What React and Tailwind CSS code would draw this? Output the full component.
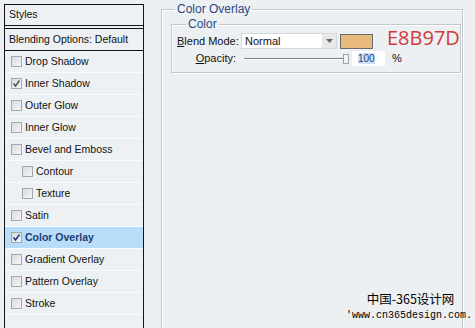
import React from "react";

const ITEMS = [
  { label: "Drop Shadow", checked: false },
  { label: "Inner Shadow", checked: true },
  { label: "Outer Glow", checked: false },
  { label: "Inner Glow", checked: false },
  { label: "Bevel and Emboss", checked: false },
  { label: "Contour", checked: false, indent: true },
  { label: "Texture", checked: false, indent: true },
  { label: "Satin", checked: false },
  { label: "Color Overlay", checked: true, active: true },
  { label: "Gradient Overlay", checked: false },
  { label: "Pattern Overlay", checked: false },
  { label: "Stroke", checked: false },
];

function CheckBox({ checked, active }) {
  return (
    <div className="w-[11px] h-[11px] shrink-0 border border-[#a3a8ad] bg-gradient-to-br from-[#d9dcdf] to-[#f4f5f6] flex items-center justify-center">
      {checked && (
        <svg width="9" height="9" viewBox="0 0 9 9">
          <path
            d="M1.5 4.5 L3.5 7 L7.5 1.5"
            fill="none"
            stroke={active ? "#1e3c7a" : "#555"}
            strokeWidth="1.6"
          />
        </svg>
      )}
    </div>
  );
}

export default function App() {
  return (
    <div
      className="w-[475px] h-[328px] overflow-hidden bg-[#edf0f3] flex items-start text-[11px] text-[#111] relative"
      style={{ fontFamily: '"Liberation Sans", Arial, sans-serif' }}
    >
      {/* left styles list */}
      <div className="ml-[4px] mt-[4px] w-[140px] h-[340px] shrink-0 border border-[#141414] bg-[#eef1f4] flex flex-col text-[10.5px]">
        <div className="h-[21px] pl-[4px] flex items-center border-b border-[#141414]">Styles</div>
        <div className="h-[2px]" />
        <div className="h-[23px] pl-[4px] flex items-center border-t border-b border-[#141414]">
          Blending Options: Default
        </div>
        {ITEMS.map((it) => (
          <div
            key={it.label}
            className={`h-[22px] flex items-center gap-[3px] border-b border-[#fafbfc] ${
              it.indent ? "pl-[17px]" : "pl-[6px]"
            } ${it.active ? "bg-[#b8ddf8] font-bold text-[#1e3c7a]" : ""}`}
          >
            <CheckBox checked={it.checked} active={it.active} />
            <span>{it.label}</span>
          </div>
        ))}
      </div>

      {/* right options */}
      <fieldset className="ml-[17px] mt-[3px] w-[302px] h-[360px] shrink-0 border border-[#c3c8cd] shadow-[inset_1px_1px_0_#fff,1px_1px_0_#fff]">
        <legend className="ml-[13px] px-[2px] text-[#29477f] text-[12px] leading-[12px]">Color Overlay</legend>
        <fieldset className="ml-[9px] mt-[3px] w-[286px] h-[55px] border border-[#c3c8cd] shadow-[inset_1px_1px_0_#fff,1px_1px_0_#fff]">
          <legend className="ml-[14px] px-[2px] text-[#29477f] text-[12px] leading-[12px]">Color</legend>
          <div className="flex items-center h-[16px] mt-[3px]">
            <div className="w-[69px] pl-[5px]">
              <span className="underline">B</span>lend Mode:
            </div>
            <div className="w-[96px] h-[16px] bg-white border border-[#d6d9dc] flex items-center">
              <span className="pl-[3px] flex-1">Normal</span>
              <div className="w-[14px] h-[14px] bg-[#e6e8ea] flex items-center justify-center">
                <svg width="7" height="4" viewBox="0 0 7 4">
                  <path d="M0 0 L7 0 L3.5 4 Z" fill="#666" />
                </svg>
              </div>
            </div>
            <div className="ml-[3px] w-[33px] h-[15px] bg-[#e8b97d] border border-[#6b6b6b]" />
            <span
              className="ml-[14px] -mt-[7px] text-[20px] leading-[20px] text-[#cf3b3b]"
              style={{ fontFamily: '"Open Sans", "Liberation Sans", sans-serif' }}
            >
              E8B97D
            </span>
          </div>
          <div className="flex items-center h-[15px] mt-[2px]">
            <div className="w-[64px] text-right">
              <span className="underline">O</span>pacity:
            </div>
            <div className="ml-[8px] w-[105px] relative h-[12px] flex items-center">
              <div className="w-[102px] h-[2px] border-t border-[#7c8084] border-b border-b-white" />
              <div className="absolute right-0 top-[1px] w-[6px] h-[10px] border border-[#9ea3a8] bg-[#f1f2f3]" />
            </div>
            <div className="ml-[3px] w-[33px] h-[15px] bg-white flex items-center pl-[6px]">
              <span className="bg-[#cde2f8] text-[#1e3c7a] text-[10px] leading-[11px]">100</span>
            </div>
            <span className="ml-[7px]">%</span>
          </div>
        </fieldset>
      </fieldset>

      {/* watermark */}
      <div className="absolute left-[346px] top-[291px] w-[129px] flex flex-col items-center">
        <div
          className="text-[12.5px] leading-[15px] text-black"
          style={{ fontFamily: '"Noto Sans CJK SC", sans-serif' }}
        >
          中国-365设计网
        </div>
        <div
          className="text-[10px] leading-[12px] text-black mt-[4px] self-start"
          style={{ fontFamily: '"Liberation Mono", monospace' }}
        >
          'www.cn365design.com.
        </div>
      </div>
    </div>
  );
}
